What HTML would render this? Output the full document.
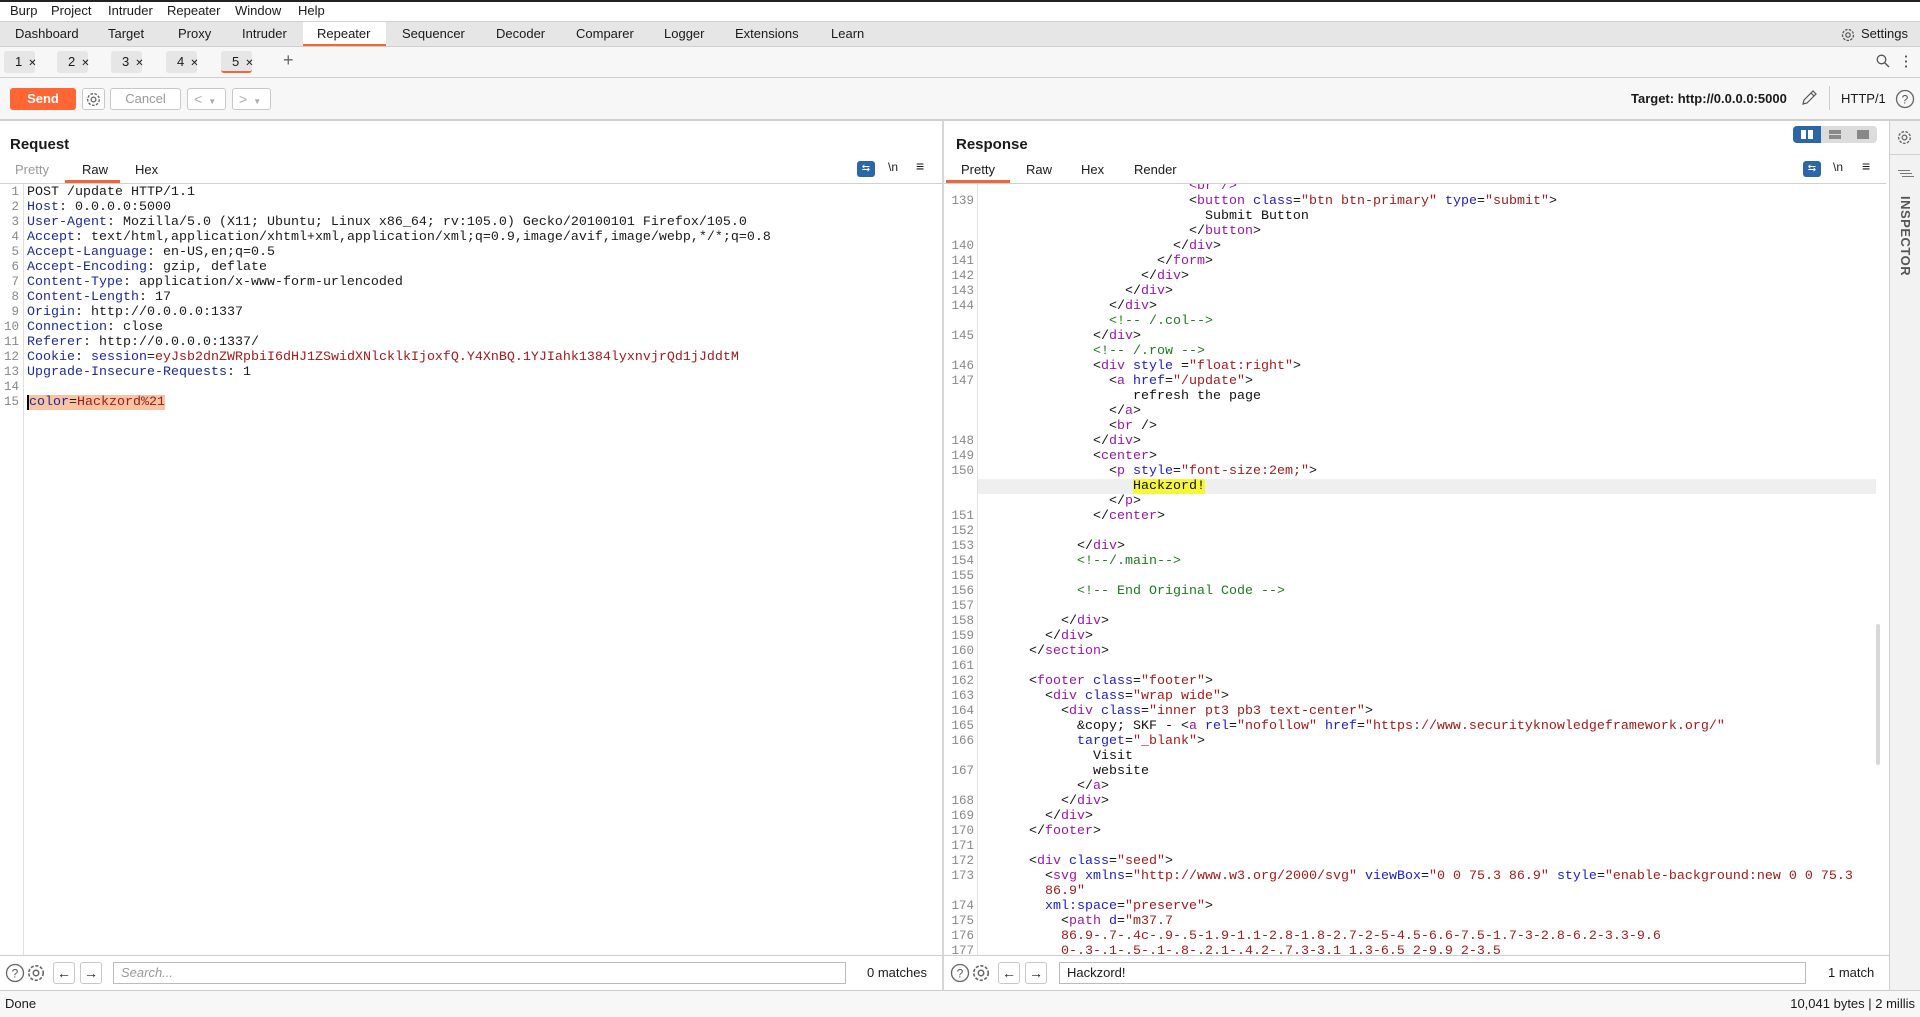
<!DOCTYPE html>
<html><head><meta charset="utf-8"><style>
*{box-sizing:border-box;margin:0;padding:0}
body{width:1920px;height:1017px;position:relative;overflow:hidden;background:#fff;font-family:"Liberation Sans",sans-serif;font-size:13px;color:#1a1a1a}
.abs{position:absolute}
.mono{font-family:"Liberation Mono",monospace;font-size:13.33px;white-space:pre;line-height:15px}
.t{color:#9b14a8}.a{color:#1c20c8}.v{color:#a21a1a}.c{color:#1d7a1d}.h{color:#1b2a9a}
.ln{position:absolute;color:#888;font-family:"Liberation Mono",monospace;font-size:12.5px;line-height:15px;text-align:right;white-space:pre}
.tab{position:absolute;top:22px;height:24px;line-height:24px;font-size:13px}
.st{position:absolute;top:51px;height:22px;width:31px;background:#e6e6e6;border-radius:3px;font-size:13px;line-height:22px;padding-left:11px}
.st i{font-style:normal;font-size:10px;margin-left:6px}
.btn{position:absolute;border:1px solid #c8c8c8;border-radius:3px;background:#fff}
</style></head><body>
<div class="abs" style="left:0;top:0;width:1920px;height:2px;background:#222"></div>
<div class="abs" style="top:3px;left:10px;font-size:13px">Burp</div>
<div class="abs" style="top:3px;left:51px">Project</div>
<div class="abs" style="top:3px;left:108px">Intruder</div>
<div class="abs" style="top:3px;left:167px">Repeater</div>
<div class="abs" style="top:3px;left:235px">Window</div>
<div class="abs" style="top:3px;left:298px">Help</div>
<div class="abs" style="top:21px;left:0;width:1920px;height:26px;background:#e6e6e6;border-top:1px solid #d0d0d0;border-bottom:1px solid #d0d0d0"></div>
<div class="abs" style="top:22px;left:303px;width:83px;height:24px;background:#fff;border-bottom:2px solid #f0653a"></div>
<div class="tab" style="left:15px">Dashboard</div>
<div class="tab" style="left:108px">Target</div>
<div class="tab" style="left:178px">Proxy</div>
<div class="tab" style="left:242px">Intruder</div>
<div class="tab" style="left:317px">Repeater</div>
<div class="tab" style="left:402px">Sequencer</div>
<div class="tab" style="left:496px">Decoder</div>
<div class="tab" style="left:576px">Comparer</div>
<div class="tab" style="left:664px">Logger</div>
<div class="tab" style="left:735px">Extensions</div>
<div class="tab" style="left:831px">Learn</div>
<svg class="abs" style="left:1840px;top:27px" width="16" height="16" viewBox="0 0 16 16"><circle cx="8" cy="8" r="5.5" fill="none" stroke="#555" stroke-width="1.3" stroke-dasharray="2.5 1.3"/><circle cx="8" cy="8" r="2.2" fill="none" stroke="#555" stroke-width="1.2"/></svg>
<div class="tab" style="left:1861px">Settings</div>
<div class="abs" style="top:47px;left:0;width:1920px;height:31px;background:#f7f7f7;border-bottom:1px solid #d0d0d0"></div>
<div class="st" style="left:4px">1<i>✕</i></div>
<div class="st" style="left:57px">2<i>✕</i></div>
<div class="st" style="left:111px">3<i>✕</i></div>
<div class="st" style="left:166px">4<i>✕</i></div>
<div class="st" style="left:221px;border-bottom:2px solid #f0653a">5<i>✕</i></div>
<div class="abs" style="left:283px;top:50px;font-size:18px;color:#666">+</div>
<svg class="abs" style="left:1876px;top:54px" width="14" height="14" viewBox="0 0 14 14"><circle cx="5.5" cy="5.5" r="4.3" fill="none" stroke="#555" stroke-width="1.3"/><path d="M8.7 8.7L13 13" stroke="#555" stroke-width="1.4"/></svg>
<div class="abs" style="left:1905px;top:54px;width:2px;height:14px;background:radial-gradient(circle,#555 1px,transparent 1.2px) 0 0/2px 5px"></div>
<div class="abs" style="top:78px;left:0;width:1920px;height:43px;background:#f7f7f7;border-bottom:2px solid #cfcfcf"></div>
<div class="abs" style="left:10px;top:88px;width:66px;height:22px;background:#ff6633;border-radius:3px;color:#fff;font-weight:bold;text-align:center;line-height:22px;font-size:13px">Send</div>
<div class="btn" style="left:82px;top:88px;width:23px;height:22px"></div>
<svg class="abs" style="left:85px;top:91px" width="17" height="17" viewBox="0 0 16 16"><circle cx="8" cy="8" r="5.5" fill="none" stroke="#666" stroke-width="1.3" stroke-dasharray="2.5 1.3"/><circle cx="8" cy="8" r="2.2" fill="none" stroke="#666" stroke-width="1.2"/></svg>
<div class="btn" style="left:110px;top:88px;width:71px;height:22px;color:#999;text-align:center;line-height:20px">Cancel</div>
<div class="btn" style="left:187px;top:88px;width:39px;height:22px;color:#aaa;line-height:20px;padding-left:6px;font-size:14px">&lt;<span style="font-size:8px;margin-left:6px">▼</span></div>
<div class="btn" style="left:232px;top:88px;width:39px;height:22px;color:#aaa;line-height:20px;padding-left:6px;font-size:14px">&gt;<span style="font-size:8px;margin-left:6px">▼</span></div>
<div class="abs" style="left:1631px;top:91px;font-weight:bold;font-size:13px">Target: http://0.0.0.0:5000</div>
<svg class="abs" style="left:1800px;top:89px" width="18" height="18" viewBox="0 0 18 18"><path d="M3 15l1-4L13 2l3 3-9 9z M11 4l3 3" fill="none" stroke="#555" stroke-width="1.2"/></svg>
<div class="abs" style="left:1829px;top:86px;width:1px;height:24px;background:#ccc"></div>
<div class="abs" style="left:1841px;top:91px">HTTP/1</div>
<svg class="abs" style="left:1895px;top:89px" width="20" height="20" viewBox="0 0 20 20"><circle cx="10" cy="10" r="8.5" fill="none" stroke="#666" stroke-width="1.3"/><text x="10" y="14.5" font-size="12" text-anchor="middle" fill="#555" font-family="Liberation Sans">?</text></svg>

<div class="abs" style="left:942px;top:121px;width:2px;height:870px;background:#d6d6d6"></div>
<div class="abs" style="left:10px;top:136px;font-weight:bold;font-size:15px">Request</div>
<div class="abs" style="left:15px;top:162px;color:#999">Pretty</div>
<div class="abs" style="left:82px;top:162px">Raw</div>
<div class="abs" style="left:135px;top:162px">Hex</div>
<div class="abs" style="left:65px;top:180px;width:55px;height:3px;background:#f0653a"></div>
<div class="abs" style="left:0;top:183px;width:942px;height:1px;background:#d0d0d0"></div>
<div class="abs" style="left:857px;top:161px;width:18px;height:16px;background:#2b66a8;border-radius:3px;color:#fff;font-size:10px;text-align:center;line-height:16px">⇆</div>
<div class="abs" style="left:888px;top:160px;font-size:12px">\n</div>
<div class="abs" style="left:916px;top:158px;font-size:14px">≡</div>
<div class="abs" style="left:23px;top:184px;width:1px;height:772px;background:#e0e0e0"></div>
<div class="ln" style="left:0;top:185px;width:19px">1
2
3
4
5
6
7
8
9
10
11
12
13
14
15</div>
<div class="abs mono" style="left:27px;top:185px">POST /update HTTP/1.1
<span class="h">Host</span>: 0.0.0.0:5000
<span class="h">User-Agent</span>: Mozilla/5.0 (X11; Ubuntu; Linux x86_64; rv:105.0) Gecko/20100101 Firefox/105.0
<span class="h">Accept</span>: text/html,application/xhtml+xml,application/xml;q=0.9,image/avif,image/webp,*/*;q=0.8
<span class="h">Accept-Language</span>: en-US,en;q=0.5
<span class="h">Accept-Encoding</span>: gzip, deflate
<span class="h">Content-Type</span>: application/x-www-form-urlencoded
<span class="h">Content-Length</span>: 17
<span class="h">Origin</span>: http://0.0.0.0:1337
<span class="h">Connection</span>: close
<span class="h">Referer</span>: http://0.0.0.0:1337/
<span class="h">Cookie</span>: <span class="a">session</span>=<span class="v">eyJsb2dnZWRpbiI6dHJ1ZSwidXNlcklkIjoxfQ.Y4XnBQ.1YJIahk1384lyxnvjrQd1jJddtM</span>
<span class="h">Upgrade-Insecure-Requests</span>: 1

<span style="background:#f8c4a4;border-left:2px solid #000"><span class="h">color</span>=<span class="v">Hackzord%21</span></span></div>

<div class="abs" style="left:956px;top:136px;font-weight:bold;font-size:15px">Response</div>
<div class="abs" style="left:961px;top:162px">Pretty</div>
<div class="abs" style="left:1026px;top:162px">Raw</div>
<div class="abs" style="left:1081px;top:162px">Hex</div>
<div class="abs" style="left:1134px;top:162px">Render</div>
<div class="abs" style="left:946px;top:180px;width:64px;height:3px;background:#f0653a"></div>
<div class="abs" style="left:944px;top:183px;width:942px;height:1px;background:#d0d0d0"></div>
<div class="abs" style="left:1793px;top:126px;width:84px;height:17px;background:#dcdcdc;border-radius:4px"></div>
<div class="abs" style="left:1793px;top:126px;width:28px;height:17px;background:#2b66a8;border-radius:4px 0 0 4px"></div>
<div class="abs" style="left:1801px;top:130px;width:5px;height:9px;background:#fff"></div><div class="abs" style="left:1808px;top:130px;width:5px;height:9px;background:#fff"></div>
<div class="abs" style="left:1829px;top:130px;width:12px;height:4px;background:#888"></div><div class="abs" style="left:1829px;top:135px;width:12px;height:4px;background:#888"></div>
<div class="abs" style="left:1857px;top:130px;width:12px;height:9px;background:#888"></div>
<div class="abs" style="left:1803px;top:161px;width:18px;height:16px;background:#2b66a8;border-radius:3px;color:#fff;font-size:10px;text-align:center;line-height:16px">⇆</div>
<div class="abs" style="left:1833px;top:160px;font-size:12px">\n</div>
<div class="abs" style="left:1862px;top:158px;font-size:14px">≡</div>
<div class="abs" style="left:977px;top:184px;width:1px;height:772px;background:#e0e0e0"></div>
<div class="abs" style="left:978px;top:479px;width:898px;height:15px;background:#efefef"></div>
<div class="abs" style="left:1876px;top:624px;width:4px;height:141px;background:#d8d8d8;border-radius:2px"></div>
<div class="abs" style="left:944px;top:184px;width:940px;height:772px;overflow:hidden">
<div class="ln" style="left:0;top:-5px;width:30px">
139


140
141
142
143
144

145

146
147



148
149
150


151
152
153
154
155
156
157
158
159
160
161
162
163
164
165
166

167

168
169
170
171
172
173

174
175
176
177</div>
<div class="abs mono" style="left:53px;top:-5px;color:#111">                        <span class="t">&lt;br /&gt;</span>
                        &lt;<span class="t">button</span> <span class="a">class</span>=<span class="v">"btn btn-primary"</span> <span class="a">type</span>=<span class="v">"submit"</span>&gt;
                          Submit Button
                        &lt;/<span class="t">button</span>&gt;
                      &lt;/<span class="t">div</span>&gt;
                    &lt;/<span class="t">form</span>&gt;
                  &lt;/<span class="t">div</span>&gt;
                &lt;/<span class="t">div</span>&gt;
              &lt;/<span class="t">div</span>&gt;
              <span class="c">&lt;!-- /.col--&gt;</span>
            &lt;/<span class="t">div</span>&gt;
            <span class="c">&lt;!-- /.row --&gt;</span>
            &lt;<span class="t">div</span> <span class="a">style</span> =<span class="v">"float:right"</span>&gt;
              &lt;<span class="t">a</span> <span class="a">href</span>=<span class="v">"/update"</span>&gt;
                 refresh the page
              &lt;/<span class="t">a</span>&gt;
              &lt;<span class="t">br</span> /&gt;
            &lt;/<span class="t">div</span>&gt;
            &lt;<span class="t">center</span>&gt;
              &lt;<span class="t">p</span> <span class="a">style</span>=<span class="v">"font-size:2em;"</span>&gt;
                 <span style="background:#f7f73a">Hackzord!</span>
              &lt;/<span class="t">p</span>&gt;
            &lt;/<span class="t">center</span>&gt;

          &lt;/<span class="t">div</span>&gt;
          <span class="c">&lt;!--/.main--&gt;</span>

          <span class="c">&lt;!-- End Original Code --&gt;</span>

        &lt;/<span class="t">div</span>&gt;
      &lt;/<span class="t">div</span>&gt;
    &lt;/<span class="t">section</span>&gt;

    &lt;<span class="t">footer</span> <span class="a">class</span>=<span class="v">"footer"</span>&gt;
      &lt;<span class="t">div</span> <span class="a">class</span>=<span class="v">"wrap wide"</span>&gt;
        &lt;<span class="t">div</span> <span class="a">class</span>=<span class="v">"inner pt3 pb3 text-center"</span>&gt;
          &amp;copy; SKF - &lt;<span class="t">a</span> <span class="a">rel</span>=<span class="v">"nofollow"</span> <span class="a">href</span>=<span class="v">"https://www.securityknowledgeframework.org/"</span>
          <span class="a">target</span>=<span class="v">"_blank"</span>&gt;
            Visit
            website
          &lt;/<span class="t">a</span>&gt;
        &lt;/<span class="t">div</span>&gt;
      &lt;/<span class="t">div</span>&gt;
    &lt;/<span class="t">footer</span>&gt;

    &lt;<span class="t">div</span> <span class="a">class</span>=<span class="v">"seed"</span>&gt;
      &lt;<span class="t">svg</span> <span class="a">xmlns</span>=<span class="v">"http://www.w3.org/2000/svg"</span> <span class="a">viewBox</span>=<span class="v">"0 0 75.3 86.9"</span> <span class="a">style</span>=<span class="v">"enable-background:new 0 0 75.3</span>
      <span class="v">86.9"</span>
      <span class="a">xml:space</span>=<span class="v">"preserve"</span>&gt;
        &lt;<span class="t">path</span> <span class="a">d</span>=<span class="v">"m37.7</span>
        <span class="v">86.9-.7-.4c-.9-.5-1.9-1.1-2.8-1.8-2.7-2-5-4.5-6.6-7.5-1.7-3-2.8-6.2-3.3-9.6</span>
        <span class="v">0-.3-.1-.5-.1-.8-.2.1-.4.2-.7.3-3.1 1.3-6.5 2-9.9 2-3.5</span></div>
</div>

<div class="abs" style="left:1889px;top:121px;width:31px;height:870px;background:#f2f2f2;border-left:1px solid #d0d0d0"></div>
<svg class="abs" style="left:1896px;top:129px" width="17" height="17" viewBox="0 0 16 16"><circle cx="8" cy="8" r="5.5" fill="none" stroke="#666" stroke-width="1.3" stroke-dasharray="2.5 1.3"/><circle cx="8" cy="8" r="2.2" fill="none" stroke="#666" stroke-width="1.2"/></svg>
<div class="abs" style="left:1890px;top:154px;width:30px;height:1px;background:#d0d0d0"></div>
<div class="abs" style="left:1898px;top:170px;width:12px;height:1px;background:#777;box-shadow:2px 3px 0 #777,4px 6px 0 #777"></div>
<div class="abs" style="left:1896px;top:196px;width:20px;height:90px"><div style="transform:rotate(90deg);transform-origin:0 0;position:absolute;left:17px;top:0;font-weight:bold;font-size:13px;color:#555;letter-spacing:0.5px;white-space:nowrap">INSPECTOR</div></div>

<div class="abs" style="left:0;top:955px;width:1889px;height:1px;background:#cfcfcf"></div>
<div class="abs" style="left:0;top:990px;width:1920px;height:1px;background:#cfcfcf"></div>
<svg class="abs" style="left:5px;top:963px" width="20" height="20" viewBox="0 0 20 20"><circle cx="10" cy="10" r="8.5" fill="none" stroke="#666" stroke-width="1.3"/><text x="10" y="14.5" font-size="12" text-anchor="middle" fill="#555" font-family="Liberation Sans">?</text></svg>
<svg class="abs" style="left:26px;top:963px" width="20" height="20" viewBox="0 0 16 16"><circle cx="8" cy="8" r="5.8" fill="none" stroke="#666" stroke-width="1.3" stroke-dasharray="2.5 1.3"/><circle cx="8" cy="8" r="2.2" fill="none" stroke="#666" stroke-width="1.2"/></svg>
<div class="btn" style="left:53px;top:962px;width:22px;height:22px;text-align:center;line-height:20px;font-size:14px">←</div>
<div class="btn" style="left:80px;top:962px;width:22px;height:22px;text-align:center;line-height:20px;font-size:14px">→</div>
<div class="btn" style="left:113px;top:962px;width:733px;height:22px;border-color:#bbb;border-radius:0;color:#999;font-style:italic;padding-left:7px;line-height:20px">Search...</div>
<div class="abs" style="left:867px;top:965px">0 matches</div>
<svg class="abs" style="left:950px;top:963px" width="20" height="20" viewBox="0 0 20 20"><circle cx="10" cy="10" r="8.5" fill="none" stroke="#666" stroke-width="1.3"/><text x="10" y="14.5" font-size="12" text-anchor="middle" fill="#555" font-family="Liberation Sans">?</text></svg>
<svg class="abs" style="left:971px;top:963px" width="20" height="20" viewBox="0 0 16 16"><circle cx="8" cy="8" r="5.8" fill="none" stroke="#666" stroke-width="1.3" stroke-dasharray="2.5 1.3"/><circle cx="8" cy="8" r="2.2" fill="none" stroke="#666" stroke-width="1.2"/></svg>
<div class="btn" style="left:998px;top:962px;width:22px;height:22px;text-align:center;line-height:20px;font-size:14px">←</div>
<div class="btn" style="left:1025px;top:962px;width:22px;height:22px;text-align:center;line-height:20px;font-size:14px">→</div>
<div class="btn" style="left:1059px;top:962px;width:747px;height:22px;border-color:#bbb;border-radius:0;padding-left:7px;line-height:20px">Hackzord!</div>
<div class="abs" style="left:1828px;top:965px">1 match</div>
<div class="abs" style="left:0;top:991px;width:1920px;height:26px;background:#f7f7f7"></div>
<div class="abs" style="left:5px;top:996px">Done</div>
<div class="abs" style="right:5px;top:996px">10,041 bytes | 2 millis</div>
</body></html>
